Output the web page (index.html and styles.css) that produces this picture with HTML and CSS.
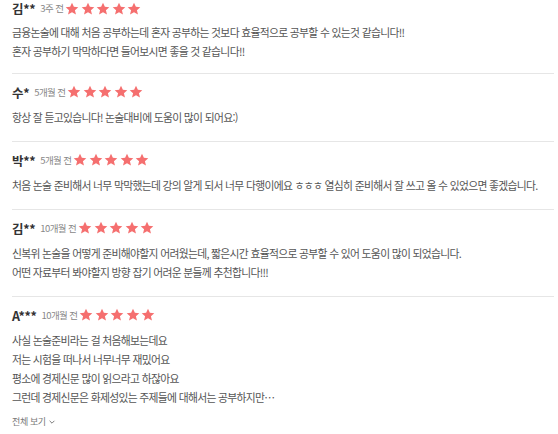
FILE: index.html
```html
<!DOCTYPE html>
<html lang="ko">
<head>
<meta charset="utf-8">
<link rel="stylesheet" href="styles.css">
<title>후기</title>
</head>
<body>
<svg width="0" height="0" class="defs">
  <defs>
    <symbol id="star" viewBox="0 0 24 24">
      <path d="M12 1.2l3.2 7 7.6.7-5.8 5.1 1.8 7.6L12 17.7l-6.8 3.9 1.8-7.6-5.8-5.1 7.6-.7z"/>
    </symbol>
  </defs>
</svg>
<div class="list">
  <div class="review">
    <div class="head">
      <span class="name">김**</span>
      <span class="time">3주 전</span>
      <span class="stars"><svg><use href="#star"/></svg><svg><use href="#star"/></svg><svg><use href="#star"/></svg><svg><use href="#star"/></svg><svg><use href="#star"/></svg></span>
    </div>
    <p class="text">금융논술에 대해 처음 공부하는데 혼자 공부하는 것보다 효율적으로 공부할 수 있는것 같습니다!!<br>혼자 공부하기 막막하다면 들어보시면 좋을 것 같습니다!!</p>
  </div>
  <div class="review">
    <div class="head">
      <span class="name">수*</span>
      <span class="time">5개월 전</span>
      <span class="stars"><svg><use href="#star"/></svg><svg><use href="#star"/></svg><svg><use href="#star"/></svg><svg><use href="#star"/></svg><svg><use href="#star"/></svg></span>
    </div>
    <p class="text">항상 잘 듣고있습니다! 논술대비에 도움이 많이 되어요:)</p>
  </div>
  <div class="review">
    <div class="head">
      <span class="name">박**</span>
      <span class="time">5개월 전</span>
      <span class="stars"><svg><use href="#star"/></svg><svg><use href="#star"/></svg><svg><use href="#star"/></svg><svg><use href="#star"/></svg><svg><use href="#star"/></svg></span>
    </div>
    <p class="text">처음 논술 준비해서 너무 막막했는데 강의 알게 되서 너무 다행이에요 ㅎㅎㅎ 열심히 준비해서 잘 쓰고 올 수 있었으면 좋겠습니다.</p>
  </div>
  <div class="review">
    <div class="head">
      <span class="name">김**</span>
      <span class="time">10개월 전</span>
      <span class="stars"><svg><use href="#star"/></svg><svg><use href="#star"/></svg><svg><use href="#star"/></svg><svg><use href="#star"/></svg><svg><use href="#star"/></svg></span>
    </div>
    <p class="text">신복위 논술을 어떻게 준비해야할지 어려웠는데, 짧은시간 효율적으로 공부할 수 있어 도움이 많이 되었습니다.<br>어떤 자료부터 봐야할지 방향 잡기 어려운 분들께 추천합니다!!!</p>
  </div>
  <div class="review last">
    <div class="head">
      <span class="name">A***</span>
      <span class="time">10개월 전</span>
      <span class="stars"><svg><use href="#star"/></svg><svg><use href="#star"/></svg><svg><use href="#star"/></svg><svg><use href="#star"/></svg><svg><use href="#star"/></svg></span>
    </div>
    <p class="text">사실 논술준비라는 걸 처음해보는데요<br>저는 시험을 떠나서 너무너무 재밌어요<br>평소에 경제신문 많이 읽으라고 하잖아요<br>그런데 경제신문은 화제성있는 주제들에 대해서는 공부하지만…</p>
    <div class="more">전체 보기<svg class="chev" viewBox="0 0 10 10"><path d="M2 3.5l3 3 3-3"/></svg></div>
  </div>
</div>
</body>
</html>
```

FILE: styles.css
```css
html, body {
  margin: 0;
  padding: 0;
  background: #fff;
}
body {
  font-family: "Noto Sans CJK KR", "Noto Sans", sans-serif;
  color: #555;
}
.defs {
  position: absolute;
  width: 0;
  height: 0;
}
.list {
  margin: 0 4px 0 12px;
}
.review {
  padding: 10px 0 14px;
  border-bottom: 1px solid #e6e6e6;
}
.review:first-child {
  padding-top: 1px;
  padding-bottom: 12px;
}
.review.last {
  border-bottom: none;
}
.head {
  display: flex;
  align-items: center;
  height: 16px;
  margin-bottom: 8px;
}
.review:first-child .head {
  height: 15px;
  margin-bottom: 7px;
}
.name {
  font-size: 12.5px;
  font-weight: 700;
  color: #333;
  letter-spacing: -0.3px;
  line-height: 15px;
}
.time {
  font-size: 9.5px;
  color: #888;
  margin-left: 5px;
  letter-spacing: -0.6px;
  line-height: 15px;
}
.stars {
  display: flex;
  margin-left: 2px;
  gap: 1.5px;
}
.stars svg {
  width: 14px;
  height: 14px;
  fill: #f56f6f;
}
.text {
  margin: 0;
  font-size: 10.8px;
  line-height: 19px;
  letter-spacing: -0.68px;
  color: #555;
}
.more {
  margin-top: 8px;
  font-size: 9px;
  line-height: 14px;
  color: #777;
  letter-spacing: -0.4px;
  display: flex;
  align-items: center;
}
.chev {
  width: 8px;
  height: 8px;
  margin-left: 2px;
  fill: none;
  stroke: #777;
  stroke-width: 1.2;
}
```
